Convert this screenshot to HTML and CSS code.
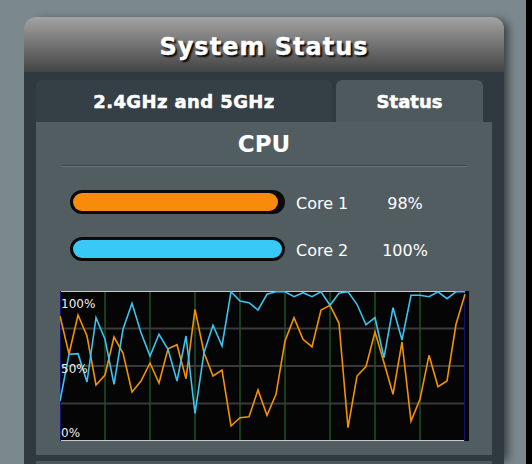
FILE: index.html
```html
<!DOCTYPE html>
<html lang="en">
<head>
    <meta charset="UTF-8">
    <meta name="viewport" content="width=device-width, initial-scale=1.0">
    <title>System Status</title>
    <link rel="stylesheet" href="styles.css">
</head>
<body>
    <div class="page">
        <div class="panel">
            <div class="panel-head">System Status</div>
            <div class="panel-body">
                <div class="tabs">
                    <div class="tab">2.4GHz and 5GHz</div>
                    <div class="tab active">Status</div>
                </div>

                <div class="section">
                    <h2 class="section-title">CPU</h2>
                    <div class="divider"></div>

                    <div class="cores">
                        <div class="core">
                            <div class="bar"><div class="fill orange" style="width: 98%"></div></div>
                            <span class="core-name">Core 1</span>
                            <span class="core-val">98%</span>
                        </div>
                        <div class="core">
                            <div class="bar"><div class="fill blue" style="width: 100%"></div></div>
                            <span class="core-name">Core 2</span>
                            <span class="core-val">100%</span>
                        </div>
                    </div>

                    <div class="chart">
                        <svg width="409" height="150" viewBox="0 0 409 150">
                            <rect x="0" y="0" width="409" height="150" fill="#050505"/>
                            <!-- grid -->
                            <g stroke="#183d18" stroke-width="2">
                                <line x1="45" y1="0" x2="45" y2="150"/>
                                <line x1="90" y1="0" x2="90" y2="150"/>
                                <line x1="135" y1="0" x2="135" y2="150"/>
                                <line x1="180" y1="0" x2="180" y2="150"/>
                                <line x1="225" y1="0" x2="225" y2="150"/>
                                <line x1="270" y1="0" x2="270" y2="150"/>
                                <line x1="315" y1="0" x2="315" y2="150"/>
                                <line x1="360" y1="0" x2="360" y2="150"/>
                            </g>
                            <g stroke="#3a3a3a" stroke-width="2">
                                <line x1="0" y1="37.5" x2="405" y2="37.5"/>
                                <line x1="0" y1="75" x2="405" y2="75"/>
                                <line x1="0" y1="112.5" x2="405" y2="112.5"/>
                            </g>
                            <line x1="0" y1="0.5" x2="405" y2="0.5" stroke="#c8c8c8"/>
                            <line x1="0" y1="149.5" x2="405" y2="149.5" stroke="#c8c8c8"/>
                            <line x1="0.5" y1="0" x2="0.5" y2="150" stroke="#141470"/>
                            <line x1="404.5" y1="0" x2="404.5" y2="150" stroke="#141470"/>

                            <polyline class="line-orange" points="0,25 9,63 18,24 27,45 36,94 45,84 54,46 63,62 72,101 81,90 90,72 99,92 108,57.7 117,53.7 126,87.7 135,18.3 144,61.7 153,85 162,79 171,135 180,126.7 189,125.7 198,99 207,124.3 216,103.3 225,50 234,26.7 243,48.3 252,55.7 261,19 270,14.3 279,32.3 288,136.7 297,85 306,75.5 315,41 324,71.7 333,103.3 342,51 351,130 360,108.3 369,64.3 378,95.7 387,90 396,33.3 405,3.3"/>
                            <polyline class="line-blue" points="0,110 9,63.3 18,62.7 27,91 36,26.7 45,48.3 54,93.3 63,38.3 72,12.3 81,41.7 90,65 99,43.3 108,58.3 117,90 126,45 135,122.3 144,61.7 153,34.3 162,55 171,0.8 180,10 189,11.7 198,19 207,3.3 216,0.8 225,0.8 234,5.7 243,1.7 252,5.7 261,0.8 270,14.3 279,2.3 288,0.8 297,13.3 306,33.7 315,26.7 324,66.7 333,16.7 342,49 351,4.3 360,4.3 369,5.7 378,0.8 387,7.7 396,0.8 405,0.8"/>

                            <text class="axis" x="1" y="16.5">100%</text>
                            <text class="axis" x="1" y="82">50%</text>
                            <text class="axis" x="1" y="145.5">0%</text>
                        </svg>
                    </div>
                </div>

                <div class="section next"></div>
            </div>
        </div>
    </div>
    <div class="edge"></div>
</body>
</html>
```

FILE: styles.css
```css
* {
    margin: 0;
    padding: 0;
    box-sizing: border-box;
}

body {
    font-family: 'DejaVu Sans', Verdana, sans-serif;
    background: #7b888d;
    height: 100vh;
    overflow: hidden;
    display: flex;
}

.page {
    flex: 1;
    padding: 17px 0 0 24px;
}

.edge {
    width: 6px;
    background: #000;
}

.panel {
    width: 480px;
    border-radius: 12px 12px 0 0;
    box-shadow: 7px 0 9px -3px rgba(0, 0, 0, 0.55);
}

.panel-head {
    height: 55px;
    padding-top: 6px;
    line-height: 49px;
    text-align: center;
    color: #fff;
    font-size: 24px;
    font-weight: bold;
    letter-spacing: 1px;
    -webkit-text-stroke: 0.4px #fff;
    text-shadow: 2px 2px 2px #000;
    background: linear-gradient(#a3a3a3, #444);
    border-radius: 12px 12px 0 0;
}

.panel-body {
    background: #2e3a3f;
    padding: 8px 12px 0;
}

.tabs {
    display: flex;
    gap: 4px;
}

.tab {
    width: 296px;
    height: 42px;
    display: flex;
    align-items: center;
    justify-content: center;
    background: #344045;
    border-radius: 6px 6px 0 0;
    color: #fff;
    font-size: 18px;
    font-weight: bold;
    letter-spacing: 0.4px;
    -webkit-text-stroke: 0.5px #fff;
}

.tab.active {
    width: 147px;
    letter-spacing: 0;
    background: #4e595e;
}

.section {
    background: #525d62;
    height: 333px;
    padding-top: 8px;
}

.section.next {
    margin-top: 6px;
    height: 3px;
    padding: 0;
    background: #4c575c;
}

.section-title {
    text-align: center;
    color: #fff;
    font-size: 23px;
    line-height: 28px;
}

.divider {
    margin: 7px 25px 0 26px;
    height: 2px;
    border-top: 1px solid #3a4549;
    border-bottom: 1px solid #68757a;
}

.cores {
    margin: 23px 0 0 34px;
    display: flex;
    flex-direction: column;
    gap: 23px;
}

.core {
    display: flex;
    align-items: center;
    height: 24px;
    color: #fff;
    font-size: 16px;
}

.bar {
    width: 215px;
    height: 24px;
    background: #0b0b0b;
    border: 3px solid #0b0b0b;
    border-radius: 12px;
}

.fill {
    height: 100%;
    border-radius: 10px;
}

.fill.orange {
    background: #f68c09;
}

.fill.blue {
    background: #38c9f6;
}

.core-name {
    width: 74px;
    margin-left: 11px;
    padding-top: 2px;
}

.core-val {
    width: 70px;
    text-align: center;
    padding-top: 2px;
}

.chart {
    margin: 30px 0 0 24px;
    width: 409px;
    height: 150px;
}

.chart svg {
    display: block;
}

.line-orange,
.line-blue {
    fill: none;
    stroke-width: 1.6;
    stroke-linejoin: miter;
}

.line-orange {
    stroke: #f39200;
}

.line-blue {
    stroke: #3cc3ee;
}

.axis {
    fill: #eee;
    font-family: 'DejaVu Sans', Verdana, sans-serif;
    font-size: 12px;
}
```
